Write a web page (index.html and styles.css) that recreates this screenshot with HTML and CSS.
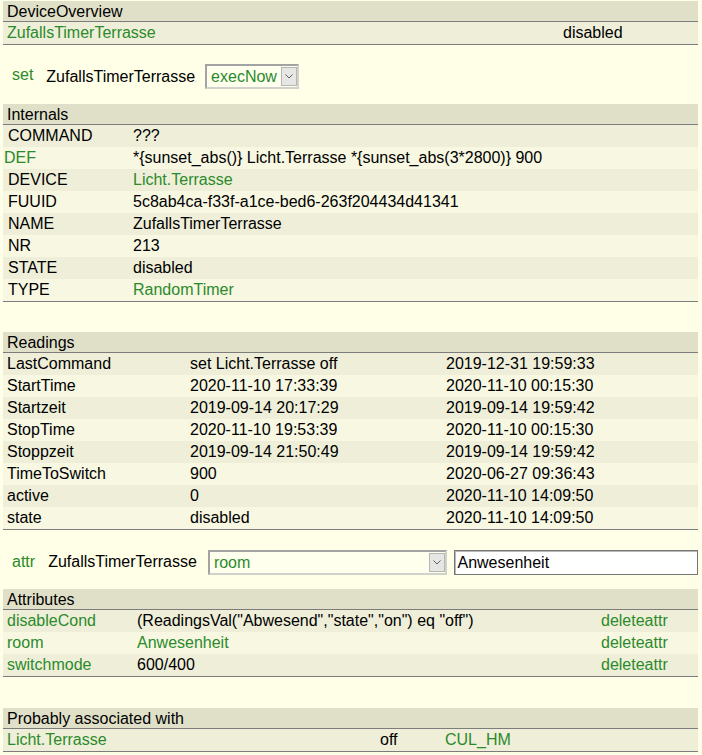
FILE: index.html
```html
<!DOCTYPE html>
<html lang="de">
<head>
<meta charset="utf-8">
<title>ZufallsTimerTerrasse</title>
<link rel="stylesheet" href="styles.css">
</head>
<body>
<div class="page">

  <section class="block overview">
    <div class="block-head">DeviceOverview</div>
    <div class="row odd"><a href="#">ZufallsTimerTerrasse</a><span>disabled</span></div>
  </section>

  <div class="cmd-row cmd-set">
    <a class="cmd" href="#">set</a>
    <span class="dev">ZufallsTimerTerrasse</span>
    <span class="select select-set">
      <span class="select-value">execNow</span>
      <span class="select-arrow"><svg width="8" height="5" viewBox="0 0 8 5"><path d="M0.5 0.5 L4 4 L7.5 0.5" fill="none" stroke="#606060" stroke-width="1"/></svg></span>
    </span>
  </div>

  <section class="block internals">
    <div class="block-head">Internals</div>
    <div class="row odd"><span>COMMAND</span><span>???</span></div>
    <div class="row even"><a class="def" href="#">DEF</a><span>*{sunset_abs()} Licht.Terrasse *{sunset_abs(3*2800)} 900</span></div>
    <div class="row odd"><span>DEVICE</span><a href="#">Licht.Terrasse</a></div>
    <div class="row even"><span>FUUID</span><span>5c8ab4ca-f33f-a1ce-bed6-263f204434d41341</span></div>
    <div class="row odd"><span>NAME</span><span>ZufallsTimerTerrasse</span></div>
    <div class="row even"><span>NR</span><span>213</span></div>
    <div class="row odd"><span>STATE</span><span>disabled</span></div>
    <div class="row even"><span>TYPE</span><a href="#">RandomTimer</a></div>
  </section>

  <section class="block readings gap-a">
    <div class="block-head">Readings</div>
    <div class="row odd"><span>LastCommand</span><span>set Licht.Terrasse off</span><span>2019-12-31 19:59:33</span></div>
    <div class="row even"><span>StartTime</span><span>2020-11-10 17:33:39</span><span>2020-11-10 00:15:30</span></div>
    <div class="row odd"><span>Startzeit</span><span>2019-09-14 20:17:29</span><span>2019-09-14 19:59:42</span></div>
    <div class="row even"><span>StopTime</span><span>2020-11-10 19:53:39</span><span>2020-11-10 00:15:30</span></div>
    <div class="row odd"><span>Stoppzeit</span><span>2019-09-14 21:50:49</span><span>2019-09-14 19:59:42</span></div>
    <div class="row even"><span>TimeToSwitch</span><span>900</span><span>2020-06-27 09:36:43</span></div>
    <div class="row odd"><span>active</span><span>0</span><span>2020-11-10 14:09:50</span></div>
    <div class="row even"><span>state</span><span>disabled</span><span>2020-11-10 14:09:50</span></div>
  </section>

  <div class="cmd-row cmd-attr">
    <a class="cmd" href="#">attr</a>
    <span class="dev">ZufallsTimerTerrasse</span>
    <span class="select select-attr">
      <span class="select-value">room</span>
      <span class="select-arrow"><svg width="8" height="5" viewBox="0 0 8 5"><path d="M0.5 0.5 L4 4 L7.5 0.5" fill="none" stroke="#606060" stroke-width="1"/></svg></span>
    </span>
    <input class="attr-input" type="text" value="Anwesenheit">
  </div>

  <section class="block attributes">
    <div class="block-head">Attributes</div>
    <div class="row odd"><a href="#">disableCond</a><span>(ReadingsVal("Abwesend","state","on") eq "off")</span><a href="#">deleteattr</a></div>
    <div class="row even"><a href="#">room</a><a href="#">Anwesenheit</a><a href="#">deleteattr</a></div>
    <div class="row odd"><a href="#">switchmode</a><span>600/400</span><a href="#">deleteattr</a></div>
  </section>

  <section class="block assoc gap-b">
    <div class="block-head">Probably associated with</div>
    <div class="row odd"><a href="#">Licht.Terrasse</a><span>off</span><a href="#">CUL_HM</a></div>
  </section>

</div>
</body>
</html>
```

FILE: styles.css
```css
* {
  box-sizing: border-box;
}

html,
body {
  margin: 0;
  padding: 0;
}

body {
  background: #FFFFE7;
  font-family: "Liberation Sans", Arial, sans-serif;
  font-size: 16px;
  color: #000;
}

a {
  color: #2B8A2B;
  text-decoration: none;
}

.page {
  width: 702px;
  padding: 1px 4px 0 3px;
}

.block-head {
  height: 21px;
  line-height: 20px;
  padding: 1px 0 0 4px;
  background: #E0E0C9;
  border-bottom: 1px solid #7C7C7C;
  white-space: nowrap;
}

.row {
  display: grid;
  height: 22px;
  line-height: 22px;
  padding-left: 4px;
  white-space: nowrap;
}

.row.odd {
  background: #EFEFD9;
}

.row.even {
  background: #F7F7E2;
}

.block .row:last-child {
  height: 23px;
  border-bottom: 1px solid #7C7C7C;
}

.gap-a {
  margin-top: 30px;
}

.gap-b {
  margin-top: 31px;
}

/* column layouts */
.overview .row {
  grid-template-columns: 556px 1fr;
}

.internals .row {
  padding-left: 5px;
  grid-template-columns: 125px 1fr;
}

.internals .def {
  margin-left: -4px;
}

.readings .row {
  grid-template-columns: 183px 256px 1fr;
}

.attributes .row {
  grid-template-columns: 130px 464px 1fr;
}

.assoc .row {
  grid-template-columns: 373px 65px 1fr;
}

/* command lines (set / attr) */
.cmd-row {
  display: flex;
  align-items: flex-start;
  padding-left: 9px;
}

.cmd-set {
  padding-top: 19px;
  padding-bottom: 15px;
}

.cmd-attr {
  padding-top: 20px;
  padding-bottom: 14px;
}

.cmd {
  line-height: 18px;
  margin-top: 2px;
  margin-right: 13px;
}

.dev {
  line-height: 18px;
  margin-top: 4px;
  margin-right: 10px;
}

.cmd-attr .cmd {
  margin-top: 3px;
}

.cmd-attr .dev {
  margin-top: 3px;
  margin-right: 11px;
}

.select {
  display: flex;
  align-items: center;
  justify-content: space-between;
  height: 25px;
  background: #FFFFEE;
  border: 2px solid;
  border-color: #A3A3A3 #D2D2CC #D2D2CC #A3A3A3;
  color: #2B8A2B;
}

.select-value {
  padding-left: 4px;
  line-height: 20px;
}

.select-set {
  width: 94px;
}

.select-attr {
  width: 241px;
}

.select-arrow {
  display: flex;
  align-items: center;
  justify-content: center;
  width: 16px;
  height: 19px;
  background: #E6E6E4;
  border: 1px solid #B6B6B2;
}

.attr-input {
  width: 245px;
  height: 25px;
  margin: 0 0 0 7px;
  padding: 0 0 0 2px;
  background: #FFFFFF;
  border: 1px solid #767676;
  box-shadow: inset 1px 1px 0 #B8B8B8;
  font-family: "Liberation Sans", Arial, sans-serif;
  font-size: 16px;
  color: #000;
  outline: none;
}
```
